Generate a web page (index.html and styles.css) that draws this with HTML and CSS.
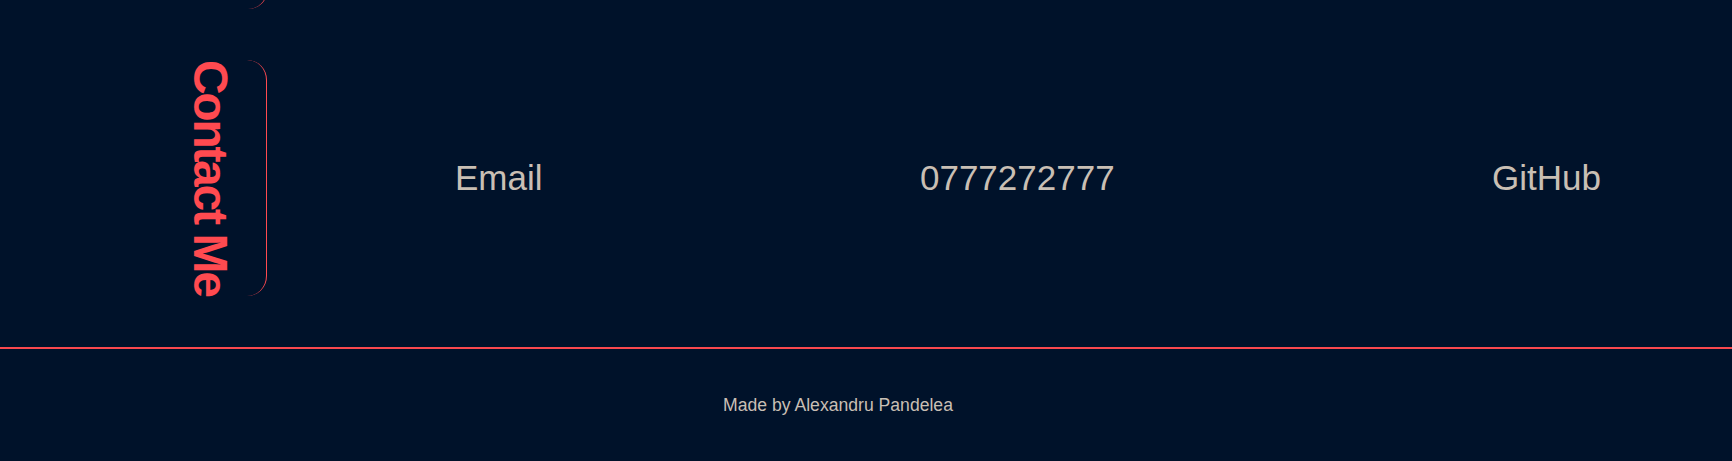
FILE: index.html
```html
<!DOCTYPE html>
<html lang="en">
<head>
<meta charset="utf-8">
<title>Contact</title>
<link rel="stylesheet" href="styles.css">
</head>
<body>
  <div class="prev-section"><div class="prev-bracket"></div></div>
  <section class="contact">
    <h2 class="contact-title">Contact Me</h2>
    <div class="contact-links">
      <a class="contact-link" href="#">Email</a>
      <a class="contact-link" href="#">0777272777</a>
      <a class="contact-link" href="#">GitHub</a>
    </div>
  </section>
  <footer class="footer">
    <p class="footer-text">Made by Alexandru Pandelea</p>
  </footer>
</body>
</html>
```

FILE: styles.css
```css
html, body {
  margin: 0;
  padding: 0;
}
body {
  background: #00122a;
  font-family: "Liberation Sans", Arial, Helvetica, sans-serif;
  color: #c9bfb4;
  height: 461px;
  overflow: hidden;
}
.prev-section {
  padding-left: 183px;
}
.prev-bracket {
  width: 84px;
  height: 30px;
  margin-top: -21px;
  border-right: 1px solid #ff4a50;
  border-bottom-right-radius: 20px;
}
.contact {
  display: flex;
  align-items: center;
  padding: 51px 0 51px 183px;
  border-bottom: 2px solid #f8484e;
}
.contact-title {
  writing-mode: vertical-rl;
  margin: 0;
  padding-right: 28px;
  font-size: 48px;
  font-weight: 700;
  color: #ff4a50;
  border-right: 1px solid #ff4a50;
  border-radius: 0 20px 20px 0;
  letter-spacing: -2.3px;
}
.contact-links {
  flex: 1;
  display: flex;
  justify-content: space-between;
  padding: 0 131px 0 188px;
}
.contact-link {
  font-size: 35px;
  color: #c9bfb4;
  text-decoration: none;
}
.footer {
  padding: 46px 56px 0 0;
  text-align: center;
}
.footer-text {
  margin: 0;
  font-size: 17.6px;
}
```
